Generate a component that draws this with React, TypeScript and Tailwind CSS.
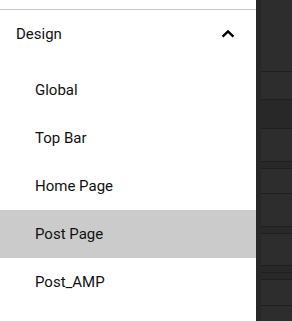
import React from 'react';

const items = ['Global', 'Top Bar', 'Home Page', 'Post Page', 'Post_AMP'];

// heights of the strips in the dark area on the right, with whether they are a shade darker
const strips: { h: number; dark?: boolean }[] = [
  { h: 72 },
  { h: 28 },
  { h: 29, dark: true },
  { h: 33 },
  { h: 7, dark: true },
  { h: 25 },
  { h: 33 },
  { h: 7, dark: true },
  { h: 32 },
  { h: 7, dark: true },
  { h: 7, dark: true },
  { h: 26 },
  { h: 20 },
];

export default function App() {
  const active = 'Post Page';

  return (
    <div className="flex h-[321px] w-[292px] overflow-hidden bg-white" style={{ fontFamily: 'Roboto, "Liberation Sans", sans-serif' }}>
      {/* Drawer */}
      <div className="w-[256px] shrink-0 bg-white">
        <div className="h-[9px]" />
        <div className="border-t border-[#c6c6c6]">
          <div className="flex h-[48px] items-center justify-between pl-4 pr-4">
            <span className="text-[15px] text-[#111]">Design</span>
            <svg width="24" height="24" viewBox="0 0 24 24" fill="none">
              <path d="M6.6 14.6L12 9.4l5.4 5.2" stroke="#000" strokeWidth="2.4" />
            </svg>
          </div>
          <ul className="pt-2">
            {items.map(label => (
              <li
                key={label}
                className={`flex h-[48px] items-center pl-[35px] text-[15px] text-[#111] ${label === active ? 'bg-[#cbcbcb]' : ''}`}
              >
                {label}
              </li>
            ))}
          </ul>
        </div>
      </div>

      {/* Dimmed page behind */}
      <div className="flex flex-1 bg-[#2d2d2d]">
        <div className="w-[5px] bg-[#272727]" />
        <div className="flex flex-1 flex-col">
          {strips.map((s, i) => (
            <div
              key={i}
              className={`shrink-0 border-b border-[#1f1f1f] ${s.dark ? 'bg-[#282828]' : 'bg-[#2d2d2d]'}`}
              style={{ height: s.h }}
            />
          ))}
        </div>
      </div>
    </div>
  );
}
